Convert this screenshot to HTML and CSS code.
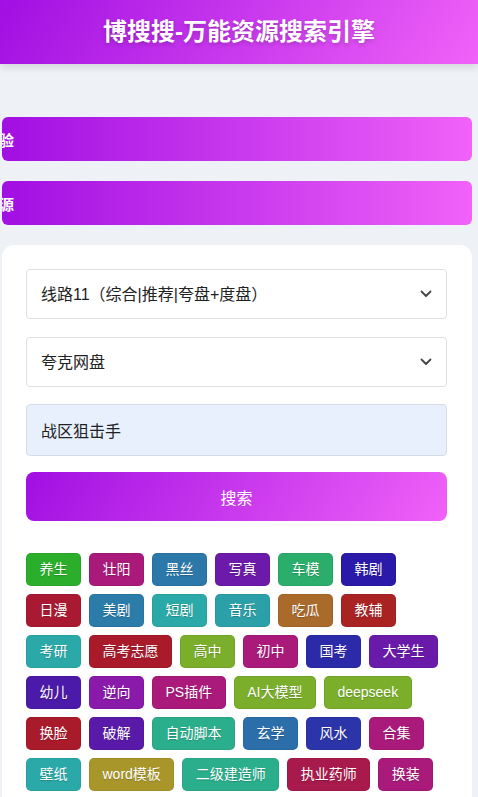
FILE: index.html
```html
<!DOCTYPE html>
<html lang="zh-CN">
<head>
<meta charset="utf-8">
<title>博搜搜-万能资源搜索引擎</title>
<link rel="stylesheet" href="styles.css">
</head>
<body>
<header class="header">
  <h1 class="title">博搜搜-万能资源搜索引擎</h1>
</header>
<main class="container">
  <div class="notice"><span class="notice-text">验</span></div>
  <div class="notice"><span class="notice-text">源</span></div>
  <section class="card">
    <div class="select-wrap">
      <select class="select">
        <option>线路11（综合|推荐|夸盘+度盘）</option>
      </select>
      <svg class="chevron" width="12" height="8" viewBox="0 0 12 8"><path d="M1.5 1.5 L6 6 L10.5 1.5" fill="none" stroke="#444" stroke-width="1.8" stroke-linecap="round" stroke-linejoin="round"/></svg>
    </div>
    <div class="select-wrap">
      <select class="select">
        <option>夸克网盘</option>
      </select>
      <svg class="chevron" width="12" height="8" viewBox="0 0 12 8"><path d="M1.5 1.5 L6 6 L10.5 1.5" fill="none" stroke="#444" stroke-width="1.8" stroke-linecap="round" stroke-linejoin="round"/></svg>
    </div>
    <input class="input" type="text" value="战区狙击手">
    <button class="btn">搜索</button>
    <div class="tags">
      <a class="tag" style="background:#2bae2b">养生</a>
      <a class="tag" style="background:#a91a7b">壮阳</a>
      <a class="tag" style="background:#2b78a9">黑丝</a>
      <a class="tag" style="background:#6c1aa9">写真</a>
      <a class="tag" style="background:#2bae6c">车模</a>
      <a class="tag" style="background:#2b1aa9">韩剧</a>
      <a class="tag" style="background:#a91a32">日漫</a>
      <a class="tag" style="background:#2b7ca9">美剧</a>
      <a class="tag" style="background:#2ba9a9">短剧</a>
      <a class="tag" style="background:#2ba0a9">音乐</a>
      <a class="tag" style="background:#a96a2b">吃瓜</a>
      <a class="tag" style="background:#a92323">教辅</a>
      <a class="tag" style="background:#2ba9a9">考研</a>
      <a class="tag" style="background:#a91a2b">高考志愿</a>
      <a class="tag" style="background:#7aae2b">高中</a>
      <a class="tag" style="background:#a91a7b">初中</a>
      <a class="tag" style="background:#2b2ba9">国考</a>
      <a class="tag" style="background:#6a1aa9">大学生</a>
      <a class="tag" style="background:#4c1aa9">幼儿</a>
      <a class="tag" style="background:#8a1aa9">逆向</a>
      <a class="tag" style="background:#a91a7b">PS插件</a>
      <a class="tag" style="background:#7aae2b">AI大模型</a>
      <a class="tag" style="background:#7aae2b">deepseek</a>
      <a class="tag" style="background:#a91a2b">换脸</a>
      <a class="tag" style="background:#5a1aa9">破解</a>
      <a class="tag" style="background:#2bae8c">自动脚本</a>
      <a class="tag" style="background:#2b6ea9">玄学</a>
      <a class="tag" style="background:#2b35a9">风水</a>
      <a class="tag" style="background:#a91a7b">合集</a>
      <a class="tag" style="background:#2ba9a9">壁纸</a>
      <a class="tag" style="background:#a9962b">word模板</a>
      <a class="tag" style="background:#2bae8c">二级建造师</a>
      <a class="tag" style="background:#a91a4c">执业药师</a>
      <a class="tag" style="background:#a91a7b">换装</a>
    </div>
  </section>
</main>
</body>
</html>
```
FILE: styles.css
```css
* { box-sizing: border-box; }
html, body { margin: 0; padding: 0; }
body {
  background: #eef2f7;
  font-family: "Liberation Sans", "Noto Sans CJK SC", Arial, sans-serif;
  color: #222;
  overflow: hidden;
}
.header {
  height: 64px;
  background: linear-gradient(120deg, #a10fe2 0%, #f062f8 100%);
  display: flex;
  align-items: center;
  justify-content: center;
  box-shadow: 0 3px 8px rgba(0, 0, 0, 0.12);
  position: relative;
  z-index: 1;
}
.title {
  margin: 0;
  color: #fff;
  font-size: 24px;
  font-weight: 700;
  line-height: 1;
  text-shadow: 0 2px 4px rgba(0, 0, 0, 0.2);
}
.container {
  padding: 53px 6px 0 2px;
  display: flex;
  flex-direction: column;
  gap: 20px;
}
.notice {
  height: 44px;
  border-radius: 6px;
  background: linear-gradient(90deg, #a10fe2 0%, #f062f8 100%);
  overflow: hidden;
  display: flex;
  align-items: center;
  white-space: nowrap;
}
.notice-text {
  color: #fff;
  font-size: 15px;
  font-weight: 700;
  margin-left: -3px;
}
.card {
  background: #fff;
  border-radius: 12px;
  padding: 24px 25px 40px 24px;
  min-height: 600px;
}
.select-wrap {
  position: relative;
  margin-bottom: 18px;
}
.select {
  appearance: none;
  -webkit-appearance: none;
  width: 100%;
  height: 50px;
  border: 1px solid #dcdfe6;
  border-radius: 4px;
  background: #fff;
  padding: 0 40px 0 14px;
  font-family: inherit;
  font-size: 16px;
  color: #222;
  outline: none;
}
.chevron {
  position: absolute;
  right: 15px;
  top: 21px;
}
.input {
  display: block;
  width: 100%;
  height: 52px;
  margin-top: -1px;
  border: 1px solid #d6dce6;
  border-radius: 4px;
  background: #e8f0fe;
  padding: 0 14px;
  font-family: inherit;
  font-size: 16px;
  color: #222;
  outline: none;
}
.btn {
  display: block;
  width: 100%;
  height: 49px;
  margin-top: 16px;
  border: none;
  border-radius: 8px;
  background: linear-gradient(120deg, #a10fe2 0%, #f062f8 100%);
  color: #fff;
  font-family: inherit;
  font-size: 16px;
}
.tags {
  margin-top: 32px;
  display: flex;
  flex-wrap: wrap;
  gap: 8px;
}
.tag {
  display: inline-block;
  padding: 6px 12.5px;
  line-height: 19px;
  border: 1px solid rgba(0, 0, 0, 0.06);
  border-radius: 5px;
  color: #fff;
  font-size: 14px;
  text-shadow: 0 1px 1px rgba(0, 0, 0, 0.2);
  white-space: nowrap;
}
```
